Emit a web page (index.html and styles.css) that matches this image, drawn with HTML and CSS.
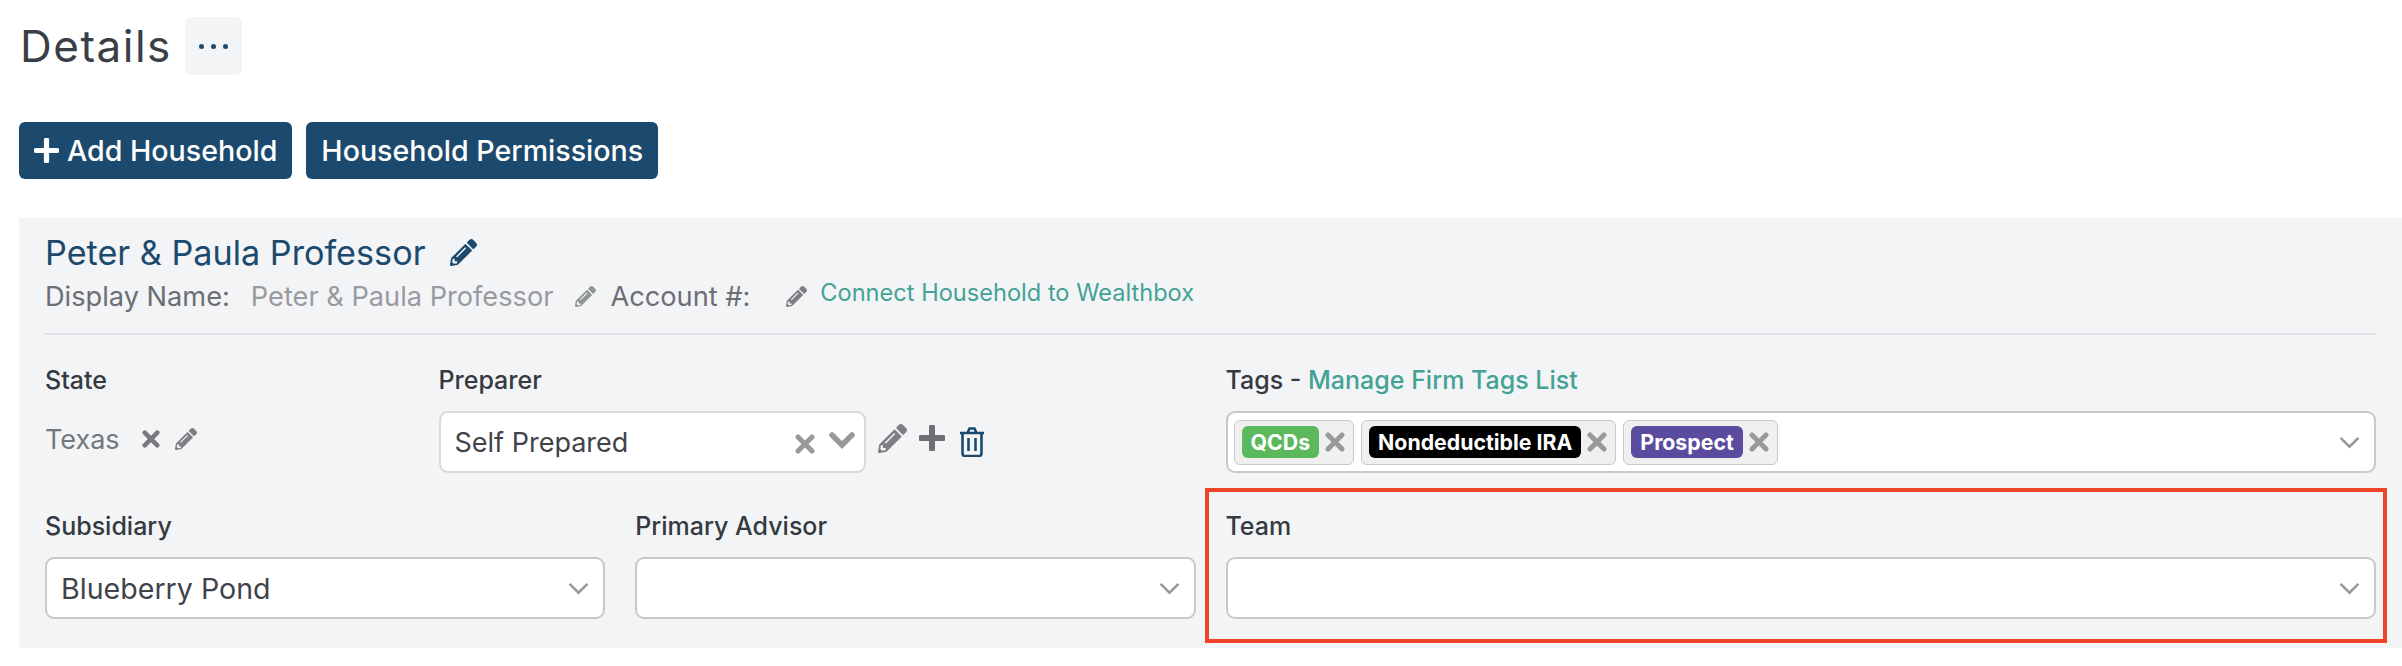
FILE: index.html
```html
<!DOCTYPE html>
<html lang="en">
<head>
    <meta charset="UTF-8">
    <meta name="viewport" content="width=device-width, initial-scale=1.0">
    <title>Details</title>
    <link rel="stylesheet" href="styles.css">
</head>
<body>
    <svg class="sprites" xmlns="http://www.w3.org/2000/svg">
        <symbol id="pencil" viewBox="0 0 512 512">
            <path fill="currentColor" d="M497.9 142.1l-46.1 46.1c-4.7 4.7-12.3 4.7-17 0l-111-111c-4.7-4.7-4.7-12.3 0-17l46.1-46.1c18.7-18.7 49.1-18.7 67.9 0l60.1 60.1c18.8 18.7 18.8 49.1 0 67.9zM284.2 99.8L21.6 362.4.4 483.9c-2.9 16.4 11.4 30.6 27.8 27.8l121.5-21.3 262.6-262.6c4.7-4.7 4.7-12.3 0-17l-111-111c-4.8-4.7-12.4-4.7-17.1 0zM124.1 339.9c-5.5-5.5-5.5-14.3 0-19.8l154-154c5.5-5.5 14.3-5.5 19.8 0s5.5 14.3 0 19.8l-154 154c-5.5 5.5-14.3 5.5-19.8 0zM88 424h48v36.3l-64.5 11.3-31.1-31.1L51.7 376H88v48z"/>
        </symbol>
        <symbol id="cross" viewBox="0 0 20 20">
            <path d="M3 3l14 14M17 3L3 17" fill="none" stroke="currentColor" stroke-width="5" stroke-linecap="round"/>
        </symbol>
        <symbol id="chevron" viewBox="0 0 20 12">
            <path d="M1.500 1.500L10 10l8.500-8.500" fill="none" stroke="currentColor" stroke-width="2.400"/>
        </symbol>
        <symbol id="chevron-thick" viewBox="0 0 26 17">
            <path d="M3 3l10 10L23 3" fill="none" stroke="currentColor" stroke-width="5.500" stroke-linecap="round"/>
        </symbol>
    </svg>

    <div class="page-head">
        <h1>Details</h1>
        <button class="more-btn"><span></span><span></span><span></span></button>
    </div>

    <div class="actions">
        <button class="btn">
            <svg class="btn-plus" viewBox="0 0 24 24"><path d="M12 2v20M2 12h20" fill="none" stroke="currentColor" stroke-width="5" stroke-linecap="round"/></svg>
            Add Household
        </button>
        <button class="btn">Household Permissions</button>
    </div>

    <div class="panel">
        <div class="household">
            <h2>Peter &amp; Paula Professor</h2>
            <svg class="icon-edit-lg"><use href="#pencil"/></svg>
        </div>
        <div class="meta">
            <span>Display Name:</span>
            <span class="meta-value">Peter &amp; Paula Professor</span>
            <svg class="icon-edit icon-edit-light"><use href="#pencil"/></svg>
            <span class="meta-account">Account #:</span>
            <svg class="icon-edit icon-edit-account"><use href="#pencil"/></svg>
            <a class="link meta-link" href="#">Connect Household to Wealthbox</a>
        </div>

        <div class="fields">
            <div class="field col-2">
                <label>State</label>
                <div class="state-value">
                    <span>Texas</span>
                    <svg class="icon-x"><use href="#cross"/></svg>
                    <svg class="icon-edit"><use href="#pencil"/></svg>
                </div>
            </div>
            <div class="field col-4">
                <label>Preparer</label>
                <div class="preparer">
                    <div class="select select-preparer">
                        <span class="select-text">Self Prepared</span>
                        <svg class="icon-x"><use href="#cross"/></svg>
                        <svg class="chevron-bold"><use href="#chevron-thick"/></svg>
                    </div>
                    <svg class="icon-pencil-md"><use href="#pencil"/></svg>
                    <svg class="icon-plus" viewBox="0 0 26 26"><path d="M13 2v22M2 13h22" fill="none" stroke="currentColor" stroke-width="6" stroke-linecap="round"/></svg>
                    <svg class="icon-trash" viewBox="0 0 26 30">
                        <path d="M1 6h24M8.500 6l2-4.500h5l2 4.500M3.500 6v20.500a2.500 2.500 0 0 0 2.500 2.500h14a2.500 2.500 0 0 0 2.500-2.500V6M9.500 11v13M16.500 11v13" fill="none" stroke="currentColor" stroke-width="2.600"/>
                    </svg>
                </div>
            </div>
            <div class="field col-6">
                <label>Tags - <a class="link" href="#">Manage Firm Tags List</a></label>
                <div class="select select-tags">
                    <div class="chip"><span class="tag tag-green">QCDs</span><svg class="icon-x"><use href="#cross"/></svg></div>
                    <div class="chip"><span class="tag tag-black">Nondeductible IRA</span><svg class="icon-x"><use href="#cross"/></svg></div>
                    <div class="chip"><span class="tag tag-purple">Prospect</span><svg class="icon-x"><use href="#cross"/></svg></div>
                    <svg class="chevron"><use href="#chevron"/></svg>
                </div>
            </div>
            <div class="field col-3">
                <label>Subsidiary</label>
                <div class="select">
                    <span class="select-text select-text-lg">Blueberry Pond</span>
                    <svg class="chevron"><use href="#chevron"/></svg>
                </div>
            </div>
            <div class="field col-3">
                <label>Primary Advisor</label>
                <div class="select">
                    <span class="select-text"></span>
                    <svg class="chevron"><use href="#chevron"/></svg>
                </div>
            </div>
            <div class="field col-6 field-marked">
                <label>Team</label>
                <div class="select">
                    <span class="select-text"></span>
                    <svg class="chevron"><use href="#chevron"/></svg>
                </div>
            </div>
        </div>
    </div>
</body>
</html>
```

FILE: styles.css
```css
body {
    margin: 0;
    font-family: Inter, "Liberation Sans", sans-serif;
    color: #343a40;
    background: #fff;
    overflow: hidden;
}
.sprites {
    display: none;
}
.page-head {
    display: flex;
    align-items: center;
    gap: 13px;
    height: 58px;
    margin-top: 17px;
    padding-left: 20px;
}
h1 {
    margin: 0;
    font-size: 44px;
    font-weight: 400;
    letter-spacing: 1.5px;
    color: #3a3f47;
}
.more-btn {
    display: flex;
    align-items: center;
    justify-content: center;
    gap: 7px;
    width: 57px;
    height: 58px;
    padding: 0;
    border: none;
    border-radius: 6px;
    background-color: #f3f4f6;
}
.more-btn span {
    width: 5px;
    height: 5px;
    border-radius: 50%;
    background-color: #1c4a6e;
}
.actions {
    display: flex;
    gap: 14px;
    margin-top: 47px;
    padding-left: 19px;
}
.btn {
    display: flex;
    align-items: center;
    gap: 8px;
    height: 57px;
    padding: 0 15px;
    border: none;
    border-radius: 6px;
    background-color: #1c4a6e;
    color: #fff;
    font-family: inherit;
    font-size: 28.6px;
    font-weight: 500;
}
.btn-plus {
    width: 25px;
    height: 25px;
}
.panel {
    position: relative;
    height: 430px;
    box-sizing: border-box;
    margin: 39px 0 0 19px;
    padding: 14px 26px 0;
    background-color: #f3f4f6;
}
.household {
    display: flex;
    align-items: center;
    gap: 24px;
    height: 40px;
}
h2 {
    margin: 0;
    font-size: 34.2px;
    font-weight: 400;
    color: #1c4a6e;
}
.icon-edit-lg {
    width: 27px;
    height: 27px;
    color: #1c4a6e;
}
.meta {
    display: flex;
    align-items: center;
    height: 44px;
    margin-top: 2px;
    padding-bottom: 15px;
    border-bottom: 2px solid #e2e4e8;
    font-size: 27.2px;
    color: #6b6f75;
}
.meta-value {
    margin-left: 21px;
    color: #979b9f;
}
.meta .icon-edit {
    margin-left: 22px;
}
.meta-account {
    margin-left: 14px;
}
.meta .icon-edit-account {
    margin-left: 36px;
}
.meta-link {
    margin-left: 13px;
    margin-top: -8px;
    font-size: 23.6px;
}
.link {
    color: #44a295;
    text-decoration: none;
}
.icon-edit {
    width: 21px;
    height: 21px;
    color: #7d7f82;
}
.icon-edit-light {
    color: #8f9696;
}
.fields {
    display: grid;
    grid-template-columns: repeat(12, 1fr);
    gap: 38px 30px;
    width: 2331px;
    margin-top: 30px;
}
.col-2 { grid-column: span 2; }
.col-3 { grid-column: span 3; }
.col-4 { grid-column: span 4; }
.col-6 { grid-column: span 6; }
label {
    display: block;
    height: 32px;
    margin-bottom: 14px;
    font-size: 25px;
    line-height: 30px;
    font-weight: 500;
    color: #343a40;
}
.field-marked::after {
    content: "";
    position: absolute;
    left: 1186px;
    top: 270px;
    width: 1174px;
    height: 147px;
    border: 4px solid #ee4327;
}
.select {
    position: relative;
    display: flex;
    align-items: center;
    box-sizing: border-box;
    height: 62px;
    padding: 0 14px;
    border: 2px solid #c8c9cb;
    border-radius: 9px;
    background-color: #fff;
}
.select-text {
    flex: 1;
    font-size: 27px;
    color: #40444a;
}
.select-text-lg {
    font-size: 28.6px;
}
.chevron {
    width: 21px;
    height: 13px;
    color: #999;
}
.state-value {
    display: flex;
    align-items: center;
    height: 56px;
    font-size: 27px;
    color: #74787c;
}
.state-value .icon-x {
    margin-left: 22px;
    width: 18px;
    height: 18px;
    color: #77797c;
}
.state-value .icon-edit {
    margin-left: 15px;
    width: 22px;
    height: 22px;
}
.preparer {
    display: flex;
    align-items: center;
}
.select-preparer {
    width: 427px;
    padding-right: 9px;
    border-color: #d8d9db;
}
.select-preparer .icon-x {
    width: 20px;
    height: 20px;
    margin-top: 4px;
    margin-right: 2px;
    color: #999;
}
.chevron-bold {
    width: 26px;
    height: 17px;
    margin: -4px 0 0 12px;
    color: #999;
}
.icon-pencil-md {
    width: 29px;
    height: 29px;
    margin: -8px 0 0 12px;
    color: #7d7f82;
}
.icon-plus {
    width: 26px;
    height: 26px;
    margin: -8px 0 0 12px;
    color: #6e7074;
}
.icon-trash {
    width: 26px;
    height: 30px;
    margin: 0 0 0 14px;
    color: #1c4a6e;
}
.select-tags {
    padding-left: 6px;
    gap: 7px;
}
.chip {
    display: flex;
    align-items: center;
    gap: 6px;
    height: 45px;
    box-sizing: border-box;
    padding: 0 8px 0 7px;
    border: 1px solid #c6c8ca;
    border-radius: 6px;
    background-color: #f0f0f0;
}
.chip .icon-x {
    width: 20px;
    height: 20px;
    color: #999;
}
.tag {
    display: flex;
    align-items: center;
    height: 32px;
    padding: 0 9px;
    border-radius: 6px;
    color: #fff;
    font-size: 21.3px;
    font-weight: 700;
}
.tag-green { background-color: #5cb85c; }
.tag-black { background-color: #000; }
.tag-purple { background-color: #5b4b9e; }
.select-tags .chevron {
    margin-left: auto;
}
```
